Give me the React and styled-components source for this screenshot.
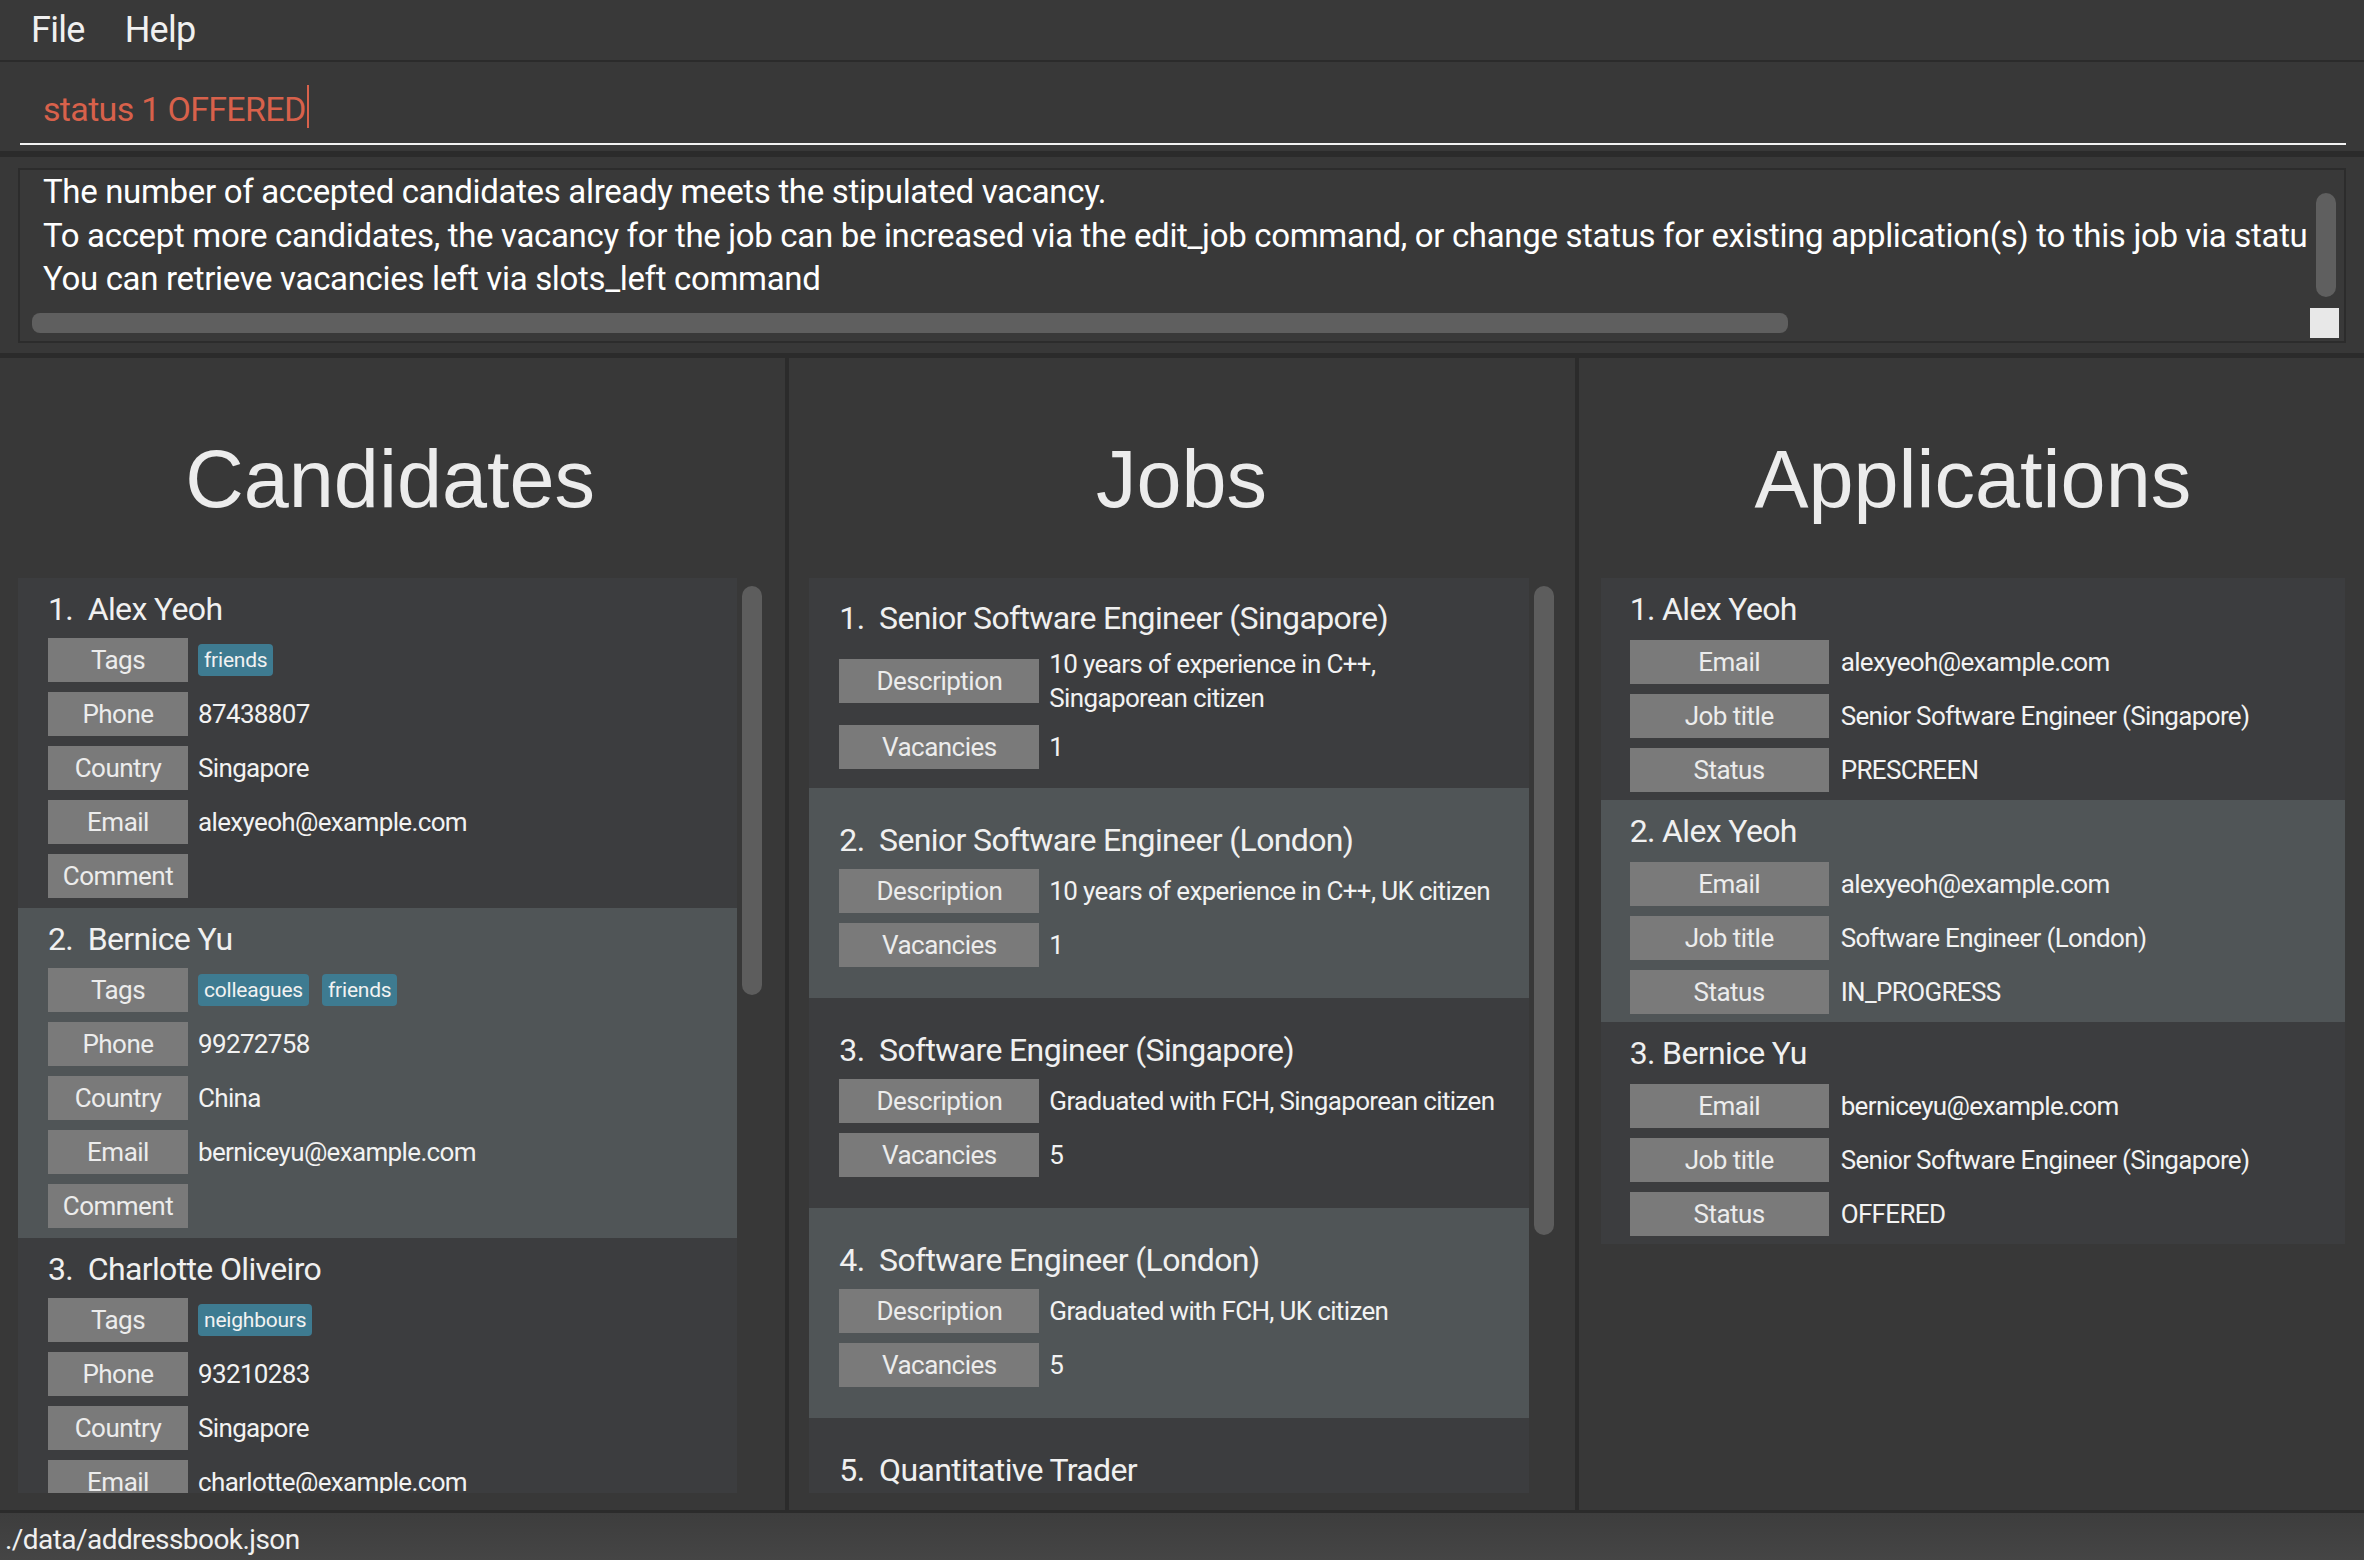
import React from "react";
import styled, { createGlobalStyle } from "styled-components";

const candidates = [
  {
    name: "Alex Yeoh",
    tags: ["friends"],
    phone: "87438807",
    country: "Singapore",
    email: "alexyeoh@example.com",
  },
  {
    name: "Bernice Yu",
    tags: ["colleagues", "friends"],
    phone: "99272758",
    country: "China",
    email: "berniceyu@example.com",
  },
  {
    name: "Charlotte Oliveiro",
    tags: ["neighbours"],
    phone: "93210283",
    country: "Singapore",
    email: "charlotte@example.com",
  },
];

const jobs = [
  {
    title: "Senior Software Engineer (Singapore)",
    description: "10 years of experience in C++,\nSingaporean citizen",
    vacancies: "1",
  },
  {
    title: "Senior Software Engineer (London)",
    description: "10 years of experience in C++, UK citizen",
    vacancies: "1",
  },
  {
    title: "Software Engineer (Singapore)",
    description: "Graduated with FCH, Singaporean citizen",
    vacancies: "5",
  },
  {
    title: "Software Engineer (London)",
    description: "Graduated with FCH, UK citizen",
    vacancies: "5",
  },
  {
    title: "Quantitative Trader",
    description: "Strong background in mathematics",
    vacancies: "2",
  },
];

const applications = [
  {
    name: "Alex Yeoh",
    email: "alexyeoh@example.com",
    job: "Senior Software Engineer (Singapore)",
    status: "PRESCREEN",
  },
  {
    name: "Alex Yeoh",
    email: "alexyeoh@example.com",
    job: "Software Engineer (London)",
    status: "IN_PROGRESS",
  },
  {
    name: "Bernice Yu",
    email: "berniceyu@example.com",
    job: "Senior Software Engineer (Singapore)",
    status: "OFFERED",
  },
];

const resultLines = [
  "The number of accepted candidates already meets the stipulated vacancy.",
  "To accept more candidates, the vacancy for the job can be increased via the edit_job command, or change status for existing application(s) to this job via status command.",
  "You can retrieve vacancies left via slots_left command",
];

const App = () => {
  return (
    <>
      <GlobalStyle />
      <Window>
        <MenuBar>
          <MenuItem>File</MenuItem>
          <MenuItem>Help</MenuItem>
        </MenuBar>

        <CommandPane>
          <CommandField>
            <CommandText>status 1 OFFERED</CommandText>
            <Caret />
          </CommandField>
        </CommandPane>

        <Divider $h={6} />

        <ResultPane>
          <ResultBox>
            <ResultText>
              {resultLines.map((line) => (
                <ResultLine key={line}>{line}</ResultLine>
              ))}
            </ResultText>
            <VScrollCell>
              <VThumb />
            </VScrollCell>
            <HScrollCell>
              <HThumb />
            </HScrollCell>
            <CornerCell>
              <Corner />
            </CornerCell>
          </ResultBox>
        </ResultPane>

        <Divider $h={5} />

        <Panels>
          <Column $left={18}>
            <ColumnTitle>Candidates</ColumnTitle>
            <ListArea>
              <ListItems>
                {candidates.map((c, i) => (
                  <Card key={c.name} $alt={i % 2 === 1} $pad="10px 0 10px 30px">
                    <CardTitle>{`${i + 1}.  ${c.name}`}</CardTitle>
                    <Fields>
                      <FieldRow>
                        <FieldLabel $w={140}>Tags</FieldLabel>
                        <TagList>
                          {c.tags.map((t) => (
                            <Tag key={t}>{t}</Tag>
                          ))}
                        </TagList>
                      </FieldRow>
                      <FieldRow>
                        <FieldLabel $w={140}>Phone</FieldLabel>
                        <FieldValue>{c.phone}</FieldValue>
                      </FieldRow>
                      <FieldRow>
                        <FieldLabel $w={140}>Country</FieldLabel>
                        <FieldValue>{c.country}</FieldValue>
                      </FieldRow>
                      <FieldRow>
                        <FieldLabel $w={140}>Email</FieldLabel>
                        <FieldValue>{c.email}</FieldValue>
                      </FieldRow>
                      <FieldRow>
                        <FieldLabel $w={140}>Comment</FieldLabel>
                        <FieldValue />
                      </FieldRow>
                    </Fields>
                  </Card>
                ))}
              </ListItems>
              <ScrollTrack>
                <ScrollThumb $h={409} />
              </ScrollTrack>
            </ListArea>
          </Column>

          <Column $left={20}>
            <ColumnTitle>Jobs</ColumnTitle>
            <ListArea>
              <ListItems>
                {jobs.map((j, i) => (
                  <Card key={j.title} $alt={i % 2 === 1} $center $pad="0 0 0 30px">
                    <CardTitle>{`${i + 1}.  ${j.title}`}</CardTitle>
                    <Fields>
                      <FieldRow>
                        <FieldLabel $w={200}>Description</FieldLabel>
                        <FieldValue $multi>{j.description}</FieldValue>
                      </FieldRow>
                      <FieldRow>
                        <FieldLabel $w={200}>Vacancies</FieldLabel>
                        <FieldValue>{j.vacancies}</FieldValue>
                      </FieldRow>
                    </Fields>
                  </Card>
                ))}
              </ListItems>
              <ScrollTrack>
                <ScrollThumb $h={649} />
              </ScrollTrack>
            </ListArea>
          </Column>

          <Column $left={22}>
            <ColumnTitle>Applications</ColumnTitle>
            <ListArea>
              <ListItems>
                {applications.map((a, i) => (
                  <Card key={i} $alt={i % 2 === 1} $pad="10px 0 8px 29px">
                    <CardTitle $gap={10}>{`${i + 1}. ${a.name}`}</CardTitle>
                    <Fields>
                      <FieldRow $gap={12}>
                        <FieldLabel $w={199}>Email</FieldLabel>
                        <FieldValue>{a.email}</FieldValue>
                      </FieldRow>
                      <FieldRow $gap={12}>
                        <FieldLabel $w={199}>Job title</FieldLabel>
                        <FieldValue>{a.job}</FieldValue>
                      </FieldRow>
                      <FieldRow $gap={12}>
                        <FieldLabel $w={199}>Status</FieldLabel>
                        <FieldValue>{a.status}</FieldValue>
                      </FieldRow>
                    </Fields>
                  </Card>
                ))}
              </ListItems>
            </ListArea>
          </Column>
        </Panels>

        <Divider $h={3} />

        <StatusBar>./data/addressbook.json</StatusBar>
      </Window>
    </>
  );
};

export default App;

const GlobalStyle = createGlobalStyle`
  html, body {
    margin: 0;
    padding: 0;
    background: #383838;
  }
  body {
    font-family: Roboto, "Liberation Sans", sans-serif;
    color: #f0f0f0;
  }
  * {
    box-sizing: border-box;
  }
`;

const Window = styled.div`
  width: 2364px;
  height: 1560px;
  display: flex;
  flex-direction: column;
  background: #383838;
  overflow: hidden;
`;

const MenuBar = styled.div`
  height: 62px;
  flex: 0 0 62px;
  display: flex;
  align-items: flex-start;
  padding-left: 11px;
  background: #393939;
  border-bottom: 2px solid #2b2b2b;
`;

const MenuItem = styled.div`
  font-size: 36px;
  letter-spacing: -0.02em;
  line-height: 60px;
  padding: 0 20px;
  color: #f0f0f0;
`;

const CommandPane = styled.div`
  flex: 0 0 89px;
  padding: 0 18px 0 20px;
  background: #383838;
`;

const CommandField = styled.div`
  height: 83px;
  display: flex;
  align-items: flex-end;
  padding: 0 0 14px 23px;
  border-bottom: 2px solid #f2f2f2;
`;

const CommandText = styled.span`
  font-size: 34px;
  letter-spacing: -0.02em;
  line-height: 40px;
  color: #d8614b;
  white-space: pre;
`;

const Caret = styled.span`
  width: 2px;
  height: 43px;
  margin-left: 1px;
  margin-bottom: 1px;
  background: #d8614b;
`;

const Divider = styled.div`
  flex: 0 0 ${({ $h }) => $h}px;
  background: #2b2b2b;
`;

const ResultPane = styled.div`
  flex: 0 0 196px;
  padding: 11px 18px 10px 18px;
  background: #383838;
`;

const ResultBox = styled.div`
  height: 100%;
  border: 2px solid #2c2c2c;
  display: grid;
  grid-template-columns: 1fr 36px;
  grid-template-rows: 1fr 36px;
  background: #393939;
`;

const ResultText = styled.div`
  overflow: hidden;
  padding: 0 0 0 23px;
`;

const ResultLine = styled.div`
  font-size: 33px;
  letter-spacing: -0.01em;
  line-height: 43.5px;
  white-space: pre;
  color: #ffffff;
`;

const VScrollCell = styled.div`
  padding: 23px 0 0 8px;
`;

const VThumb = styled.div`
  width: 20px;
  height: 104px;
  border-radius: 10px;
  background: #5f5f5f;
`;

const HScrollCell = styled.div`
  padding: 8px 0 0 12px;
`;

const HThumb = styled.div`
  width: 1756px;
  height: 20px;
  border-radius: 8px;
  background: #5f5f5f;
`;

const CornerCell = styled.div`
  padding: 3px 0 0 2px;
`;

const Corner = styled.div`
  width: 29px;
  height: 30px;
  background: #e8e8e8;
`;

const Panels = styled.div`
  flex: 1;
  display: grid;
  grid-template-columns: 1fr 1fr 1fr;
  column-gap: 4px;
  background: #2b2b2b;
  min-height: 0;
`;

const Column = styled.div`
  display: flex;
  flex-direction: column;
  min-height: 0;
  padding: 0 ${({ $left }) => 41 - $left}px 17px ${({ $left }) => $left}px;
  background: #383838;
`;

const ColumnTitle = styled.div`
  flex: 0 0 220px;
  display: flex;
  align-items: center;
  justify-content: center;
  padding-top: 22px;
  font-family: "Liberation Sans", Arial, sans-serif;
  font-size: 81px;
  line-height: 1;
  color: #ececec;
`;

const ListArea = styled.div`
  flex: 1;
  min-height: 0;
  display: flex;
  overflow: hidden;
`;

const ListItems = styled.div`
  flex: 1;
  min-width: 0;
  display: flex;
  flex-direction: column;
  overflow: hidden;
`;

const ScrollTrack = styled.div`
  flex: 0 0 25px;
  padding: 8px 0 0 5px;
`;

const ScrollThumb = styled.div`
  width: 20px;
  height: ${({ $h }) => $h}px;
  border-radius: 10px;
  background: #5d5d5d;
`;

const Card = styled.div`
  flex-shrink: 0;
  display: flex;
  flex-direction: column;
  justify-content: ${({ $center }) => ($center ? "center" : "flex-start")};
  min-height: ${({ $center }) => ($center ? "210px" : "0")};
  padding: ${({ $pad }) => $pad};
  background: ${({ $alt }) => ($alt ? "#505557" : "#3c3d3f")};
`;

const CardTitle = styled.div`
  font-size: 32px;
  letter-spacing: -0.02em;
  line-height: 42px;
  margin-bottom: ${({ $gap }) => ($gap ? $gap : 8)}px;
  white-space: pre;
  color: #f0f0f0;
`;

const Fields = styled.div`
  display: flex;
  flex-direction: column;
  gap: 10px;
`;

const FieldRow = styled.div`
  display: flex;
  align-items: center;
  gap: ${({ $gap }) => ($gap ? $gap : 10)}px;
  min-height: 44px;
`;

const FieldLabel = styled.div`
  flex: 0 0 ${({ $w }) => $w}px;
  height: 44px;
  display: flex;
  align-items: center;
  justify-content: center;
  background: #7a7a7a;
  font-size: 26px;
  letter-spacing: -0.02em;
  color: #ececec;
`;

const FieldValue = styled.div`
  font-size: 26px;
  letter-spacing: -0.025em;
  line-height: ${({ $multi }) => ($multi ? "34px" : "44px")};
  white-space: pre;
  color: #f2f2f2;
`;

const TagList = styled.div`
  display: flex;
  gap: 13px;
`;

const Tag = styled.span`
  height: 32px;
  display: flex;
  align-items: center;
  padding: 0 6px;
  border-radius: 4px;
  background: #3e7b91;
  font-size: 21px;
  letter-spacing: -0.01em;
  color: #f2f2f2;
`;

const StatusBar = styled.div`
  flex: 0 0 47px;
  padding: 6px 0 0 5px;
  background: linear-gradient(to bottom, #3d3d3d, #454545);
  font-size: 28px;
  letter-spacing: -0.02em;
  line-height: 41px;
  color: #f0f0f0;
`;
